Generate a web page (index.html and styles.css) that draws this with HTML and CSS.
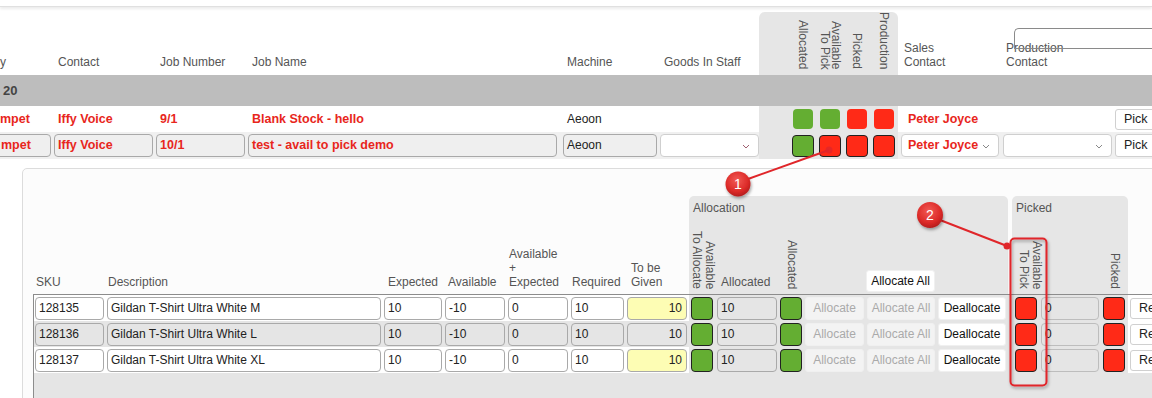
FILE: index.html
```html
<!DOCTYPE html>
<html lang="en">
<head>
  <meta charset="UTF-8">
  <title>Jobs - Picking</title>
  <link rel="stylesheet" href="styles.css">
</head>
<body>
  <div class="topbar"></div>

  <section class="jobs">
    <div class="mrow mhead">
      <div class="hc first">y</div>
      <div class="hc">Contact</div>
      <div class="hc">Job Number</div>
      <div class="hc">Job Name</div>
      <div class="hc">Machine</div>
      <div class="hc">Goods In Staff</div>
      <div class="flags flags-head">
        <div class="fcol"><span class="vtext">Allocated</span></div>
        <div class="fcol"><span class="vtext">Available<br>To Pick</span></div>
        <div class="fcol"><span class="vtext">Picked</span></div>
        <div class="fcol"><span class="vtext">Production</span></div>
      </div>
      <div class="hc sales">Sales<br>Contact</div>
      <div class="hc prod">Production<br>Contact<span class="ghost-box"></span></div>
      <div class="hc"></div>
    </div>

    <div class="band">20</div>

    <div class="mrow r1">
      <div class="c first red">mpet</div>
      <div class="c red">Iffy Voice</div>
      <div class="c red">9/1</div>
      <div class="c red">Blank Stock - hello</div>
      <div class="c">Aeoon</div>
      <div class="c"></div>
      <div class="flags">
        <div class="fcol"><span class="sq green"></span></div>
        <div class="fcol"><span class="sq green"></span></div>
        <div class="fcol"><span class="sq red-sq"></span></div>
        <div class="fcol"><span class="sq red-sq"></span></div>
      </div>
      <div class="c red sales-txt">Peter Joyce</div>
      <div class="c"></div>
      <div class="c pick-cell"><span class="btn pick">Pick</span></div>
    </div>

    <div class="mrow r2">
      <div class="c first"><span class="fld red lead">mpet</span></div>
      <div class="c"><span class="fld red">Iffy Voice</span></div>
      <div class="c"><span class="fld red">10/1</span></div>
      <div class="c wide"><span class="fld red">test - avail to pick demo</span></div>
      <div class="c"><span class="fld">Aeoon</span></div>
      <div class="c flush">
        <span class="fld sel"><svg class="chev" viewBox="0 0 8 5"><path d="M1 1l3 3 3-3" fill="none" stroke="#a06070" stroke-width="1"/></svg></span>
      </div>
      <div class="flags">
        <div class="fcol"><span class="sq big green"></span></div>
        <div class="fcol"><span class="sq big red-sq"></span></div>
        <div class="fcol"><span class="sq big red-sq"></span></div>
        <div class="fcol"><span class="sq big red-sq"></span></div>
      </div>
      <div class="c sales"><span class="fld sel red">Peter Joyce<svg class="chev" viewBox="0 0 8 5"><path d="M1 1l3 3 3-3" fill="none" stroke="#888" stroke-width="1"/></svg></span></div>
      <div class="c prod-cell"><span class="fld sel"><svg class="chev" viewBox="0 0 8 5"><path d="M1 1l3 3 3-3" fill="none" stroke="#888" stroke-width="1"/></svg></span></div>
      <div class="c pick-cell"><span class="btn pick">Pick</span></div>
    </div>
  </section>

  <section class="detail">
    <div class="dgrid dhead">
      <div class="dh">SKU</div>
      <div class="dh">Description</div>
      <div class="dh pad5">Expected</div>
      <div class="dh pad4">Available</div>
      <div class="dh">Available<br>+<br>Expected</div>
      <div class="dh">Required</div>
      <div class="dh pad5">To be<br>Given</div>
      <div class="grp">
        <div class="grp-title">Allocation</div>
        <div class="grp-cols">
          <div class="gc w27"><span class="vtext tall">Available<br>To Allocate</span></div>
          <div class="gc w63 left">Allocated</div>
          <div class="gc w25"><span class="vtext tall">Allocated</span></div>
          <div class="gc w62"></div>
          <div class="gc w71"><span class="btn head-btn">Allocate All</span></div>
          <div class="gc w71"></div>
        </div>
      </div>
      <div></div>
      <div class="grp">
        <div class="grp-title">Picked</div>
        <div class="grp-cols">
          <div class="gc w28 shift"><span class="vtext tall">Available<br>To Pick</span></div>
          <div class="gc w61"></div>
          <div class="gc w27"><span class="vtext tall">Picked</span></div>
        </div>
      </div>
      <div></div>
    </div>

    <div class="dbody">
      <div class="dgrid drow white">
        <div class="cell"><span class="fld">128135</span></div>
        <div class="cell"><span class="fld">Gildan T-Shirt Ultra White M</span></div>
        <div class="cell"><span class="fld">10</span></div>
        <div class="cell"><span class="fld">-10</span></div>
        <div class="cell"><span class="fld">0</span></div>
        <div class="cell"><span class="fld">10</span></div>
        <div class="cell"><span class="fld given">10</span></div>
        <div class="gcells">
          <div class="gc w27"><span class="sq box green"></span></div>
          <div class="gc w63"><span class="fld grey">10</span></div>
          <div class="gc w25"><span class="sq box green"></span></div>
          <div class="gc w62"><span class="btn off">Allocate</span></div>
          <div class="gc w71"><span class="btn off">Allocate All</span></div>
          <div class="gc w71"><span class="btn on">Deallocate</span></div>
        </div>
        <div></div>
        <div class="gcells">
          <div class="gc w28"><span class="sq box red-sq"></span></div>
          <div class="gc w61"><span class="fld grey light">0</span></div>
          <div class="gc w27"><span class="sq box red-sq"></span></div>
        </div>
        <div class="cell tail"><span class="btn re">Re</span></div>
      </div>

      <div class="dgrid drow">
        <div class="cell"><span class="fld">128136</span></div>
        <div class="cell"><span class="fld">Gildan T-Shirt Ultra White L</span></div>
        <div class="cell"><span class="fld">10</span></div>
        <div class="cell"><span class="fld">-10</span></div>
        <div class="cell"><span class="fld">0</span></div>
        <div class="cell"><span class="fld">10</span></div>
        <div class="cell"><span class="fld given">10</span></div>
        <div class="gcells">
          <div class="gc w27"><span class="sq box green"></span></div>
          <div class="gc w63"><span class="fld grey">10</span></div>
          <div class="gc w25"><span class="sq box green"></span></div>
          <div class="gc w62"><span class="btn off">Allocate</span></div>
          <div class="gc w71"><span class="btn off">Allocate All</span></div>
          <div class="gc w71"><span class="btn on">Deallocate</span></div>
        </div>
        <div></div>
        <div class="gcells">
          <div class="gc w28"><span class="sq box red-sq"></span></div>
          <div class="gc w61"><span class="fld grey light">0</span></div>
          <div class="gc w27"><span class="sq box red-sq"></span></div>
        </div>
        <div class="cell tail"><span class="btn re">Re</span></div>
      </div>

      <div class="dgrid drow white">
        <div class="cell"><span class="fld">128137</span></div>
        <div class="cell"><span class="fld">Gildan T-Shirt Ultra White XL</span></div>
        <div class="cell"><span class="fld">10</span></div>
        <div class="cell"><span class="fld">-10</span></div>
        <div class="cell"><span class="fld">0</span></div>
        <div class="cell"><span class="fld">10</span></div>
        <div class="cell"><span class="fld given">10</span></div>
        <div class="gcells">
          <div class="gc w27"><span class="sq box green"></span></div>
          <div class="gc w63"><span class="fld grey">10</span></div>
          <div class="gc w25"><span class="sq box green"></span></div>
          <div class="gc w62"><span class="btn off">Allocate</span></div>
          <div class="gc w71"><span class="btn off">Allocate All</span></div>
          <div class="gc w71"><span class="btn on">Deallocate</span></div>
        </div>
        <div></div>
        <div class="gcells">
          <div class="gc w28"><span class="sq box red-sq"></span></div>
          <div class="gc w61"><span class="fld grey light">0</span></div>
          <div class="gc w27"><span class="sq box red-sq"></span></div>
        </div>
        <div class="cell tail"><span class="btn re">Re</span></div>
      </div>
    </div>
  </section>

  <!-- annotation markers drawn over the screenshot -->
  <svg class="callouts" width="1152" height="398" viewBox="0 0 1152 398">
    <defs>
      <radialGradient id="dot" cx="45%" cy="35%" r="65%">
        <stop offset="0" stop-color="#f25a55"/>
        <stop offset="0.7" stop-color="#dc2a28"/>
        <stop offset="1" stop-color="#b51d1d"/>
      </radialGradient>
      <filter id="shadow" x="-50%" y="-50%" width="200%" height="200%">
        <feDropShadow dx="1" dy="2" stdDeviation="1.5" flood-color="#000" flood-opacity="0.35"/>
      </filter>
    </defs>
    <line x1="748" y1="179" x2="829" y2="150" stroke="#e0262a" stroke-width="2"/>
    <circle cx="829" cy="150" r="3.5" fill="#e0262a" opacity="0.8"/>
    <circle cx="738" cy="184" r="12.5" fill="url(#dot)" filter="url(#shadow)"/>
    <text x="738" y="189" class="num">1</text>

    <rect x="1010.5" y="238.5" width="36" height="147" rx="4" fill="none" stroke="#e0262a" stroke-width="2" filter="url(#shadow)"/>
    <line x1="940" y1="220" x2="1007" y2="246" stroke="#e0262a" stroke-width="2"/>
    <circle cx="1007" cy="246" r="3.5" fill="#e0262a"/>
    <circle cx="930" cy="215" r="13" fill="url(#dot)" filter="url(#shadow)"/>
    <text x="930" y="220" class="num">2</text>
  </svg>
</body>
</html>
```

FILE: styles.css
```css
* {
  box-sizing: border-box;
  margin: 0;
  padding: 0;
}

html, body {
  width: 1152px;
  height: 398px;
  overflow: hidden;
}

body {
  position: relative;
  background: #fff;
  font-family: "Liberation Sans", Arial, sans-serif;
  font-size: 12px;
  color: #222;
}

.topbar {
  height: 7px;
  border-bottom: 1px solid #e0e0e0;
  box-shadow: 0 2px 3px rgba(0,0,0,.08);
}

/* main job list */

.mrow {
  display: grid;
  grid-template-columns: 54px 102px 92px 315px 97px 99px 139px 104px 112px 60px;
}

.mhead {
  height: 68px;
}

.hc {
  align-self: end;
  padding: 0 0 6px 4px;
  line-height: 14px;
  color: #555;
}

.hc.first,
.c.first {
  padding-left: 0;
}

.hc.sales {
  padding-left: 6px;
}

.hc.prod {
  position: relative;
}

.ghost-box {
  position: absolute;
  left: 12px;
  top: -13px;
  width: 200px;
  height: 21px;
  border: 1px solid #8a8a8a;
  border-right: 0;
  border-radius: 5px 0 0 0;
}

.flags {
  display: flex;
  padding-left: 30px;
  background: #e6e6e6;
}

.flags-head {
  margin-top: 5px;
  border-radius: 6px 6px 0 0;
}

.fcol {
  width: 27px;
  display: flex;
  flex-direction: column;
  justify-content: center;
  align-items: center;
}

.flags-head .fcol {
  justify-content: flex-end;
  padding-bottom: 6px;
}

.vtext {
  writing-mode: vertical-rl;
  text-align: right;
  line-height: 11px;
  color: #555;
  white-space: nowrap;
}

.vtext.tall {
  line-height: 13px;
}

.band {
  height: 31px;
  line-height: 31px;
  padding-left: 3px;
  background: #bdbdbd;
  font-size: 13px;
  font-weight: bold;
  color: #444;
}

.c {
  display: flex;
  align-items: center;
  padding: 0 3px 0 4px;
}

.r1 {
  height: 26px;
}

.r2 {
  height: 27px;
  background: #f0f0f0;
}

.r2 .c {
  padding: 0 3px 0 0;
}

.r2 .c.wide {
  padding-right: 6px;
}

.r2 .c.flush {
  padding: 0;
}

.r2 .c.sales {
  padding-left: 3px;
}

.r2 .c.prod-cell {
  padding: 0 2px 0 1px;
}

.c.pick-cell,
.r2 .c.pick-cell {
  padding-left: 1px;
}

.c.sales-txt {
  padding-left: 10px;
}

.red {
  color: #e8261c;
  font-weight: bold;
  font-size: 12.5px;
}

.sq {
  display: block;
  width: 20px;
  height: 20px;
  border-radius: 4px;
}

.sq.big {
  width: 22px;
  height: 22px;
  border: 1px solid #222;
}

.sq.box {
  width: 22px;
  height: 23px;
  border: 1px solid #222;
}

.green {
  background: #64ae32;
}

.red-sq {
  background: #ff2a17;
}

.fld {
  display: block;
  position: relative;
  width: 100%;
  height: 23px;
  line-height: 21px;
  padding: 0 3px;
  border: 1px solid #a9a9a9;
  border-radius: 4px;
  background: #efefef;
  white-space: nowrap;
  overflow: hidden;
}

.fld.lead {
  margin-left: -20px;
  width: calc(100% + 20px);
  padding-left: 20px;
}

.fld.sel {
  background: #fff;
  border-color: #cfcfcf;
  padding-left: 6px;
}

.chev {
  position: absolute;
  right: 8px;
  top: 9px;
  width: 8px;
  height: 5px;
}

.btn {
  display: block;
  height: 23px;
  line-height: 21px;
  border: 1px solid #e8e8e8;
  border-radius: 3px;
  background: #fff;
  font-size: 12px;
  text-align: center;
  white-space: nowrap;
}

.btn.pick,
.btn.re {
  width: 60px;
  height: 21px;
  line-height: 19px;
  text-align: left;
  padding-left: 8px;
  border-color: #d0d0d0;
  font-size: 12.5px;
}

.r2 .btn.pick {
  height: 23px;
  line-height: 21px;
}

/* detail panel */

.detail {
  width: 1300px;
  height: 260px;
  margin: 9px 0 0 22px;
  border: 1px solid #dcdcdc;
  border-radius: 5px;
  background: #fcfcfc;
}

.dgrid {
  display: grid;
  grid-template-columns: 72px 277px 61px 63px 63px 56px 63px 319px 4px 116px 120px;
}

.dhead {
  height: 125px;
  margin-left: 11px;
}

.dh {
  align-self: end;
  padding: 0 0 5px 2px;
  line-height: 14px;
  color: #555;
}

.dh.pad5 {
  padding-left: 5px;
}

.dh.pad4 {
  padding-left: 4px;
}

.grp {
  align-self: end;
  height: 98px;
  display: flex;
  flex-direction: column;
  background: #e6e6e6;
  border-radius: 5px 5px 0 0;
}

.grp-title {
  padding: 5px 4px 0;
  line-height: 14px;
  color: #555;
}

.grp-cols {
  flex: 1;
  display: flex;
  align-items: flex-end;
}

.gc {
  display: flex;
  justify-content: center;
  align-items: center;
}

.grp-cols .gc {
  align-self: stretch;
  align-items: flex-end;
  padding-bottom: 5px;
  color: #555;
  line-height: 14px;
}

.grp-cols .gc.left {
  justify-content: flex-start;
  padding-left: 5px;
}

.grp-cols .gc.shift {
  padding-left: 8px;
}

.head-btn {
  width: 69px;
  height: 22px;
  line-height: 20px;
  margin-bottom: -3px;
  margin-right: 2px;
  color: #111;
  border-color: #f0f0f0;
}

.w25 { width: 25px; }
.w27 { width: 27px; }
.w28 { width: 28px; }
.w61 { width: 61px; }
.w62 { width: 62px; }
.w63 { width: 63px; }
.w71 { width: 71px; }

.dbody {
  height: 110px;
  margin-left: 10px;
  border-top: 1px solid #8c8c8c;
  border-left: 1px solid #8c8c8c;
  background: #e5e5e5;
}

.drow {
  height: 26px;
}

.cell {
  display: flex;
  align-items: center;
  padding: 0 2px 0 1px;
}

.drow.white .cell {
  background: #fff;
}

.cell.tail {
  background: #fff;
  padding-left: 2px;
}

.gcells {
  display: flex;
}

.gcells .gc {
  padding: 0 2px 0 1px;
}

.gcells .gc .fld,
.gcells .gc .btn {
  width: 100%;
}

.drow .fld {
  background: #fff;
}

.drow:not(.white) .cell .fld {
  background: #e5e5e5;
}

.drow .fld.given {
  background: #fdfdb4;
  text-align: right;
  padding-right: 4px;
}

.drow .fld.grey {
  background: #e5e5e5;
}

.fld.light {
  border-color: #bdbdbd;
}

.btn.off {
  background: #f3f3f3;
  border-color: #f0f0f0;
  color: #aaa;
}

.btn.on {
  color: #111;
  border-color: #f0f0f0;
}

.btn.re {
  width: 50px;
}

.callouts {
  position: absolute;
  left: 0;
  top: 0;
  pointer-events: none;
}

.num {
  fill: #fff;
  font-family: "Liberation Sans", Arial, sans-serif;
  font-size: 14px;
  text-anchor: middle;
}
```
